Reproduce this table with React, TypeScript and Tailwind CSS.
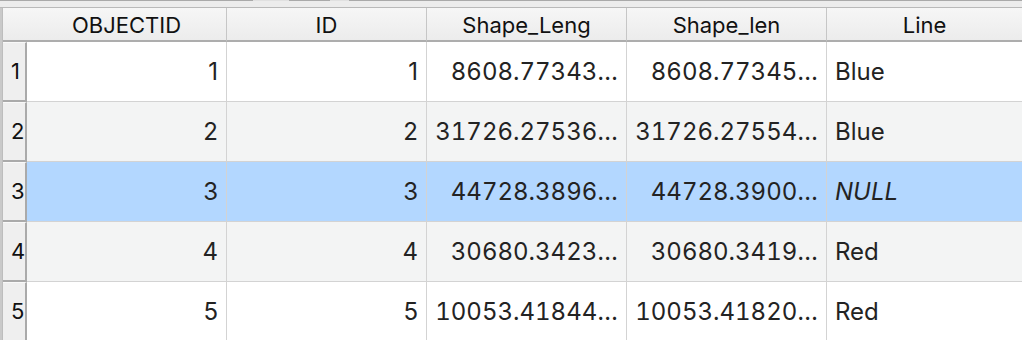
import React from "react";

const rows = [
  { n: "1", oid: "1", id: "1", sl: "8608.77343…", sl2: "8608.77345…", line: "Blue", italic: false },
  { n: "2", oid: "2", id: "2", sl: "31726.27536…", sl2: "31726.27554…", line: "Blue", italic: false },
  { n: "3", oid: "3", id: "3", sl: "44728.3896…", sl2: "44728.3900…", line: "NULL", italic: true },
  { n: "4", oid: "4", id: "4", sl: "30680.3423…", sl2: "30680.3419…", line: "Red", italic: false },
  { n: "5", oid: "5", id: "5", sl: "10053.41844…", sl2: "10053.41820…", line: "Red", italic: false },
];

const headers = ["OBJECTID", "ID", "Shape_Leng", "Shape_len", "Line"];

export default function App() {
  return (
    <div
      className="w-[1022px] h-[340px] overflow-hidden bg-white flex flex-col"
      style={{ fontFamily: "Inter, 'Liberation Sans', sans-serif" }}
    >
      {/* top strip */}
      <div className="h-[8px] shrink-0 bg-[#ececec] border-b border-[#b9b9b9] flex items-start">
        <div className="w-[253px] h-px bg-[#a9a9a9]" />
        <div className="w-[36px] h-px bg-[#e0e0e0]" />
        <div className="w-[41px] h-px bg-[#a9a9a9]" />
        <div className="w-[19px] h-px bg-[#e0e0e0]" />
        <div className="flex-1 h-px bg-[#a9a9a9]" />
      </div>
      <div className="flex flex-1 min-h-0">
        <div className="w-[3px] shrink-0 bg-[#c9c9c9] border-r border-[#bdbdbd]" />
        <div className="flex-1 grid grid-cols-[24px_200px_200px_200px_200px_1fr] grid-rows-[34px_60px_60px_60px_60px_60px] content-start">
          {/* header */}
          <div className="bg-gradient-to-b from-[#f6f6f6] to-[#ececec] border-b-2 border-[#adadad]" />
          {headers.map((h, i) => (
            <div
              key={h}
              className={`bg-gradient-to-b from-[#f6f6f6] to-[#ececec] border-b-2 border-[#adadad] flex items-center justify-center pt-[3px] text-[22px] text-[#111] ${
                i < headers.length - 1 ? "border-r border-r-[#c6c6c6]" : ""
              }`}
            >
              {h}
            </div>
          ))}
          {rows.map((r, idx) => {
            const bg =
              idx === 2 ? "bg-[#b3d7ff]" : idx % 2 === 1 ? "bg-[#f3f4f4]" : "bg-white";
            const cell = `${bg} border-b border-r border-[#d3d3d3] flex items-center text-[24px] text-[#232323] whitespace-nowrap overflow-hidden`;
            return (
              <React.Fragment key={r.n}>
                <div className="bg-[#efefef] border-r-2 border-b-2 border-[#aaaaaa] border-t border-t-[#f9f9f9] flex items-center pl-[8px] text-[22px] text-[#111]">
                  {r.n}
                </div>
                <div className={`${cell} justify-end pr-[8px]`}>{r.oid}</div>
                <div className={`${cell} justify-end pr-[8px]`}>{r.id}</div>
                <div className={`${cell} justify-end pr-[8px] tabular-nums`}>{r.sl}</div>
                <div className={`${cell} justify-end pr-[8px] tabular-nums`}>{r.sl2}</div>
                <div className={`${bg} border-b border-[#d3d3d3] flex items-center pl-[8px] text-[24px] text-[#232323] ${r.italic ? "italic" : ""}`}>
                  {r.line}
                </div>
              </React.Fragment>
            );
          })}
        </div>
      </div>
    </div>
  );
}
